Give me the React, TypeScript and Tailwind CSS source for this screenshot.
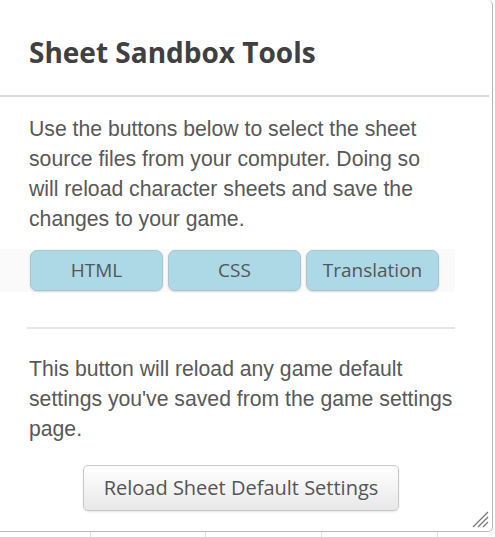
import React from "react";

export default function App() {
  const body = { fontFamily: '"Liberation Sans", Arial, sans-serif' };
  const ui = { fontFamily: '"Open Sans", "Noto Sans", sans-serif' };
  return (
    <div className="w-[495px] h-[537px] bg-white overflow-hidden flex flex-col">
      <div className="relative w-[493px] h-[532px] shrink-0 border-r border-b border-[#b8b8b8] rounded-br-[5px] rounded-tr-[5px] flex flex-col">
        <div className="h-[97px] mr-[3px] border-b-2 border-[#dcdcdc] flex items-center pl-[29px] pt-[8px]">
          <h1 className="text-[28px] font-bold text-[#404040] leading-none" style={ui}>
            Sheet Sandbox Tools
          </h1>
        </div>
        <div className="pl-[27px] w-[455px] flex flex-col">
          <p className="pl-[2px] mt-[17px] text-[21.2px] leading-[30px] text-[#585858] whitespace-nowrap" style={body}>
            Use the buttons below to select the sheet<br />
            source files from your computer. Doing so<br />
            will reload character sheets and save the<br />
            changes to your game.
          </p>
          <div className="-ml-[27px] pl-[30px] mt-[15px] py-[1px] bg-[#fafafa] flex gap-[5px]">
            {["HTML", "CSS", "Translation"].map((t) => (
              <button
                key={t}
                className="w-[133px] h-[41px] rounded-[7px] bg-[#add8e6] border border-[#a9c6cf] shadow-[0_1px_2px_rgba(0,0,0,0.15)] text-[19px] text-[#555]"
                style={ui}
              >
                {t}
              </button>
            ))}
          </div>
          <div className="mt-[35px] h-[2px] bg-[#e6e6e6]" />
          <p className="pl-[2px] mt-[25px] text-[21.2px] leading-[30px] text-[#585858] whitespace-nowrap" style={body}>
            This button will reload any game default<br />
            settings you've saved from the game settings<br />
            page.
          </p>
          <div className="mt-[21px] flex justify-center">
            <button
              className="w-[316px] h-[46px] rounded-[5px] border border-[#c8c8c8] bg-gradient-to-b from-[#ffffff] to-[#e8e8e8] shadow-[0_1px_2px_rgba(0,0,0,0.1)] text-[20px] text-[#555]"
              style={ui}
            >
              Reload Sheet Default Settings
            </button>
          </div>
        </div>
        <svg
          className="absolute right-[3px] bottom-[3px]"
          width="18"
          height="18"
          viewBox="0 0 18 18"
        >
          <line x1="2" y1="17" x2="17" y2="2" stroke="#777" strokeWidth="1.3" />
          <line x1="7" y1="17" x2="17" y2="7" stroke="#777" strokeWidth="1.3" />
          <line x1="12" y1="17" x2="17" y2="12" stroke="#777" strokeWidth="1.3" />
        </svg>
      </div>
      <div className="flex h-[5px]">
        <div className="w-[90px]" />
        <div className="w-[115px] border-l border-[#e0e0e0]" />
        <div className="w-[116px] border-l border-[#e0e0e0]" />
        <div className="w-[116px] border-l border-[#e0e0e0]" />
        <div className="flex-1 border-l border-[#e0e0e0]" />
      </div>
    </div>
  );
}
